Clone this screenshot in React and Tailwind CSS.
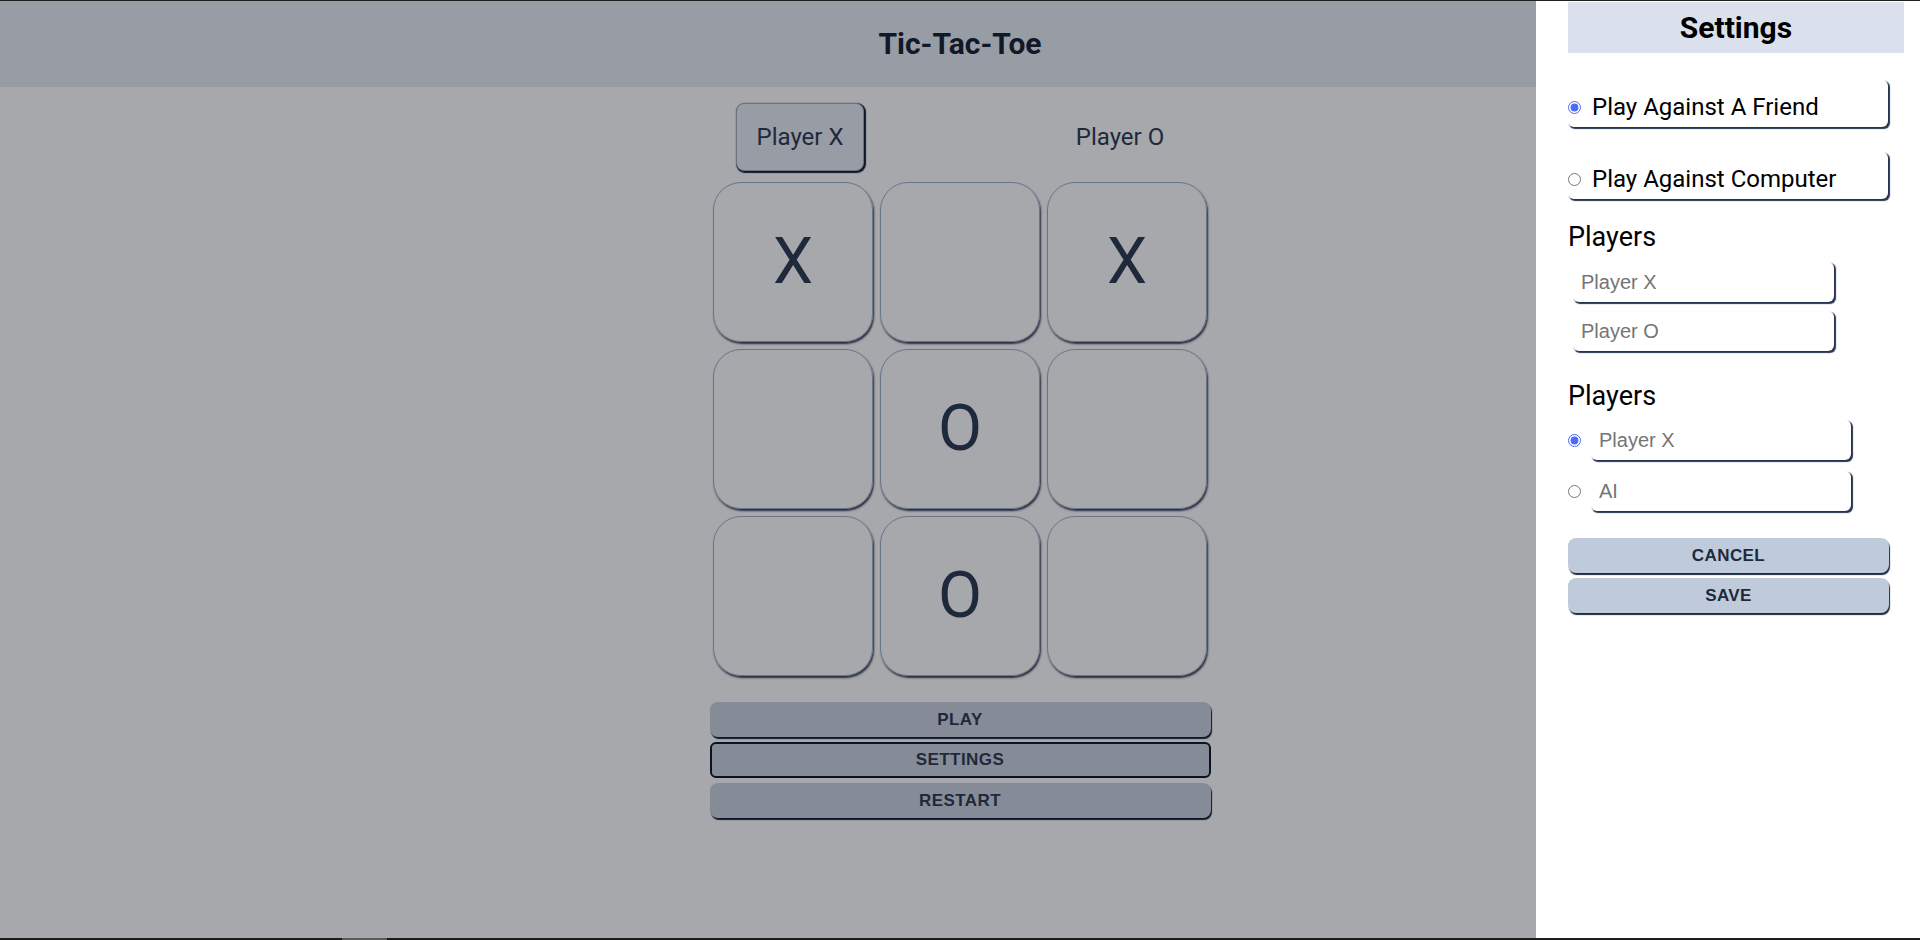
const board = ["X", "", "X", "", "O", "", "", "O", ""];

const Cell = ({ value }) => {
  return (
    <div className="flex h-[160px] w-[160px] items-center justify-center rounded-[28px] border border-[#66758a] text-[64px] leading-none text-[#1e293b] shadow-[1px_2px_2px_rgba(15,23,42,0.85)]">
      {value}
    </div>
  );
};

const GameButton = ({ children, focused }) => {
  return (
    <button
      className={
        focused
          ? "h-[36px] w-full rounded-md border-2 border-[#0b1220] bg-[#868c97] font-['Liberation_Sans',sans-serif] text-[17px] font-bold tracking-wide text-[#1e293b]"
          : "h-[35px] w-full rounded-lg bg-[#868c97] font-['Liberation_Sans',sans-serif] text-[17px] font-bold tracking-wide text-[#1e293b] shadow-[1px_2px_1px_#0f172a]"
      }
    >
      {children}
    </button>
  );
};

const ModeOption = ({ label, checked }) => {
  return (
    <label className="flex h-[47px] w-[320px] items-center gap-[11px] rounded-md pt-[7px] shadow-[1.5px_1.5px_1px_#27344f]">
      <input type="radio" name="mode" defaultChecked={checked} className="m-0 h-[13px] w-[13px] accent-[#4a6cf7]" />
      <span className="text-2xl text-black">{label}</span>
    </label>
  );
};

const NameInput = ({ placeholder, wide }) => {
  return (
    <input
      placeholder={placeholder}
      className={
        (wide ? "w-[260px]" : "w-[261px]") +
        " h-[40px] rounded-md pl-2 font-['Liberation_Sans',sans-serif] text-[20px] text-black outline-none shadow-[1.5px_1.5px_1px_#27344f] placeholder:text-[#757575]"
      }
    />
  );
};

const PanelButton = ({ children }) => {
  return (
    <button className="h-[35px] w-[321px] rounded-lg bg-[#bfcbdb] font-['Liberation_Sans',sans-serif] text-[17px] font-bold tracking-wide text-[#1e293b] shadow-[1px_2px_1px_#1e293b]">
      {children}
    </button>
  );
};

export default function App() {
  return (
    <div className="relative h-[940px] w-full overflow-hidden border-t border-[#1f1f1f] bg-[#a7a8ac] font-['Roboto',sans-serif]">
      {/* Game */}
      <header className="flex h-[86px] items-center justify-center bg-[#989ca4]">
        <h1 className="text-3xl font-bold text-[#111827]">Tic-Tac-Toe</h1>
      </header>

      <main className="flex flex-col items-center">
        <div className="mt-4 grid h-[68px] w-[640px] grid-cols-2">
          <div className="flex justify-center">
            <div className="flex w-[128px] items-center justify-center rounded-lg border border-[#6b7280] bg-[#979ca5] text-2xl text-[#1e293b] shadow-[1px_1px_1px_1px_#0f172a]">
              Player X
            </div>
          </div>
          <div className="flex items-center justify-center text-2xl text-[#1e293b]">Player O</div>
        </div>

        <div className="mt-[11px] grid grid-cols-3 gap-[7px]">
          {board.map((v, i) => (
            <Cell key={i} value={v} />
          ))}
        </div>

        <div className="mt-[26px] flex w-[501px] flex-col gap-[5px]">
          <GameButton>PLAY</GameButton>
          <GameButton focused>SETTINGS</GameButton>
          <GameButton>RESTART</GameButton>
        </div>
      </main>

      {/* Settings drawer */}
      <aside className="absolute right-0 top-0 flex h-full w-96 flex-col bg-white pl-8 pr-4">
        <div className="mt-px flex h-[51px] items-center justify-center bg-[#dbe1ec]">
          <h2 className="text-3xl font-bold text-black">Settings</h2>
        </div>

        <div className="mt-[27px] flex flex-col gap-[25px]">
          <ModeOption label="Play Against A Friend" checked />
          <ModeOption label="Play Against Computer" />
        </div>

        <h3 className="mt-[22px] text-[27px] leading-[32px] text-black">Players</h3>
        <div className="ml-[5px] mt-[9px] flex flex-col gap-[9px]">
          <NameInput placeholder="Player X" />
          <NameInput placeholder="Player O" />
        </div>

        <h3 className="mt-[29px] text-[27px] leading-[32px] text-black">Players</h3>
        <div className="mt-[8px] flex flex-col gap-[11px]">
          <div className="flex items-center gap-[10px]">
            <input type="radio" name="first" defaultChecked className="m-0 h-[13px] w-[13px] accent-[#4a6cf7]" />
            <NameInput placeholder="Player X" wide />
          </div>
          <div className="flex items-center gap-[10px]">
            <input type="radio" name="first" className="m-0 h-[13px] w-[13px] accent-[#4a6cf7]" />
            <NameInput placeholder="AI" wide />
          </div>
        </div>

        <div className="mt-[27px] flex flex-col gap-[5px]">
          <PanelButton>CANCEL</PanelButton>
          <PanelButton>SAVE</PanelButton>
        </div>
      </aside>

      <div className="absolute bottom-0 left-0 flex h-[2px] w-full bg-[#1c1c1c]">
        <div className="ml-[342px] w-[45px] bg-[#5a5a5a]"></div>
      </div>
    </div>
  );
}
